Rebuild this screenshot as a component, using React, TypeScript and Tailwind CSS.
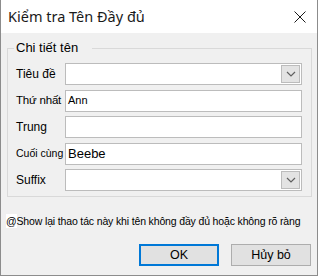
import { useState } from "react";

const labelFont = { fontFamily: '"Liberation Sans", Arial, sans-serif' };

function Chevron() {
  return (
    <svg width="10" height="6" viewBox="0 0 10 6" fill="none">
      <path d="M1 1l4 4 4-4" stroke="#606060" strokeWidth="1.2" />
    </svg>
  );
}

function TextField({ value, className }: { value?: string; className?: string }) {
  return (
    <div className="flex-1 h-full bg-white border border-[#bcbcbc] flex items-center pl-[2px]">
      <span className={className}>{value}</span>
    </div>
  );
}

function ComboField() {
  return (
    <div className="flex-1 h-full bg-white border border-[#bcbcbc] flex items-center justify-end p-[1px]">
      <div className="h-full w-[19px] bg-[#e3e3e3] border border-[#bcbcbc] flex items-center justify-center">
        <Chevron />
      </div>
    </div>
  );
}

export default function App() {
  const [showAgain] = useState(true);

  const rows = [
    { label: "Tiêu đề", labelClass: "text-[12px]", kind: "combo" as const },
    { label: "Thứ nhất", labelClass: "text-[11.5px] tracking-[-0.2px]", kind: "text" as const, value: "Ann", valueClass: "text-[11px]" },
    { label: "Trung", labelClass: "text-[12px]", kind: "text" as const },
    { label: "Cuối cùng", labelClass: "text-[10.5px]", kind: "text" as const, value: "Beebe", valueClass: "text-[13px]" },
    { label: "Suffix", labelClass: "text-[12px]", kind: "combo" as const },
  ];

  return (
    <div className="w-[318px] h-[276px] flex flex-col bg-[#f0f0f0] border-x border-b border-[#8c8c8c] text-black" style={labelFont}>
      {/* title bar */}
      <div className="h-[33px] bg-white flex items-center justify-between pl-[7px] pr-[11px] shrink-0">
        <span className="text-[14.5px] text-[#1a1a1a]" style={{ fontFamily: '"Noto Sans", "Open Sans", sans-serif' }}>
          Kiểm tra Tên Đầy đủ
        </span>
        <svg width="12" height="12" viewBox="0 0 12 12" fill="none">
          <path d="M0.5 0.5l11 11M11.5 0.5l-11 11" stroke="#1a1a1a" strokeWidth="1" />
        </svg>
      </div>

      <fieldset className="mt-[8px] ml-[6px] mr-[5px] border border-[#d9d9d9] pl-[8px] pr-[9px] pt-[8px] pb-[5px]">
        <legend className="text-[13px] leading-[14px] ml-[-2px] pl-[2px] pr-[14px]">Chi tiết tên</legend>
        <div className="flex flex-col gap-[4.5px]">
          {rows.map((r) => (
            <div key={r.label} className="flex items-center h-[22px]">
              <span className={`w-[49px] shrink-0 whitespace-nowrap ${r.labelClass}`}>{r.label}</span>
              {r.kind === "combo" ? <ComboField /> : <TextField value={r.value} className={r.valueClass} />}
            </div>
          ))}
        </div>
      </fieldset>

      <div className="mt-[17px] ml-[5px] text-[10.5px] leading-[14px] tracking-[-0.15px] whitespace-nowrap flex items-center">
        <span className={showAgain ? "bg-white" : ""}>@</span>
        <span>Show lại thao tác này khi tên không đầy đủ hoặc không rõ ràng</span>
      </div>

      <div className="mt-auto mb-[9px] mr-[6px] flex justify-end gap-[12px]">
        <button className="w-[80px] h-[22px] bg-[#e1e1e1] border-2 border-[#0078d7] text-[12.5px]">OK</button>
        <button className="w-[80px] h-[22px] bg-[#e1e1e1] border border-[#adadad] text-[12.5px]">Hủy bỏ</button>
      </div>
    </div>
  );
}
